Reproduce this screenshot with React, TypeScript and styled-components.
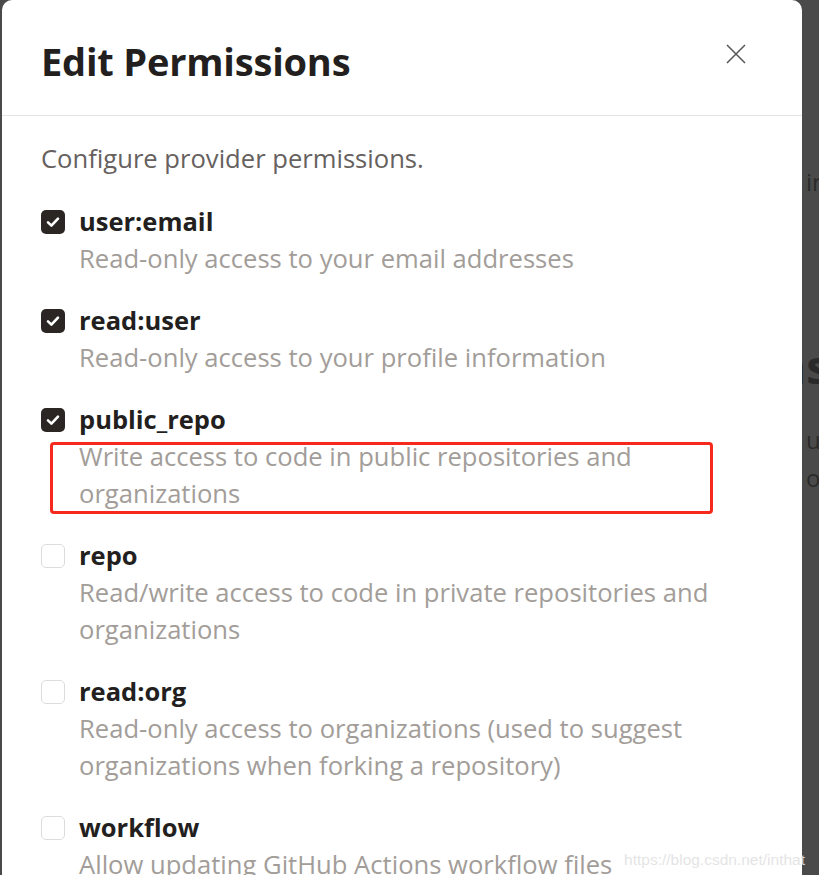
import React from 'react'
import styled, { createGlobalStyle } from 'styled-components'

const permissions = [
    { name: 'user:email', text: 'Read-only access to your email addresses', checked: true },
    { name: 'read:user', text: 'Read-only access to your profile information', checked: true },
    {
        name: 'public_repo',
        text: 'Write access to code in public repositories and organizations',
        checked: true,
        marked: true,
    },
    { name: 'repo', text: 'Read/write access to code in private repositories and organizations', checked: false },
    {
        name: 'read:org',
        text: 'Read-only access to organizations (used to suggest organizations when forking a repository)',
        checked: false,
    },
    { name: 'workflow', text: 'Allow updating GitHub Actions workflow files', checked: false },
]

function App() {
    return (
        <>
            <GlobalStyle />
            <Screen>
                <Modal>
                    <Header>
                        <Title>Edit Permissions</Title>
                        <CloseButton aria-label="Close">
                            <svg width="20" height="20" viewBox="0 0 20 20">
                                <path d="M1 1 L19 19 M19 1 L1 19" stroke="#5a5a5a" strokeWidth="1.6" fill="none" />
                            </svg>
                        </CloseButton>
                    </Header>
                    <Body>
                        <Intro>Configure provider permissions.</Intro>
                        <List>
                            {permissions.map((p) => (
                                <Item key={p.name}>
                                    <Box $checked={p.checked}>
                                        {p.checked && (
                                            <svg width="16" height="16" viewBox="0 0 16 16">
                                                <path
                                                    d="M3 8.4 L6.4 11.6 L13 4.6"
                                                    stroke="#fff"
                                                    strokeWidth="2.6"
                                                    strokeLinecap="round"
                                                    strokeLinejoin="round"
                                                    fill="none"
                                                />
                                            </svg>
                                        )}
                                    </Box>
                                    <Name>{p.name}</Name>
                                    <Description $marked={p.marked}>{p.text}</Description>
                                </Item>
                            ))}
                        </List>
                    </Body>
                </Modal>
                <Behind>
                    <BehindText $top={163}>in</BehindText>
                    <BehindHeading>ns</BehindHeading>
                    <BehindText $top={30}>u</BehindText>
                    <BehindText $top={0}>ov</BehindText>
                </Behind>
                <Watermark>https://blog.csdn.net/inthat</Watermark>
            </Screen>
        </>
    )
}

export default App

const GlobalStyle = createGlobalStyle`
    html, body {
        margin: 0;
        padding: 0;
        background: #4a4a4a;
        overflow: hidden;
    }
    * {
        box-sizing: border-box;
    }
`

const Screen = styled.div`
    position: relative;
    display: flex;
    width: 819px;
    height: 875px;
    overflow: hidden;
    background: #4a4a4a;
    font-family: 'Open Sans', 'Noto Sans', sans-serif;
`

const Modal = styled.div`
    flex: 0 0 800px;
    margin-left: 2px;
    background: #fff;
    border-radius: 10px 10px 0 0;
    height: 900px;
`

const Header = styled.div`
    display: flex;
    align-items: flex-start;
    justify-content: space-between;
    height: 116px;
    padding: 38px 56px 0 39px;
    border-bottom: 1px solid #e4e4e4;
`

const Title = styled.h1`
    margin: 0;
    font-size: 38px;
    line-height: 46px;
    font-weight: 700;
    color: #231f1e;
    letter-spacing: -0.2px;
`

const CloseButton = styled.button`
    display: flex;
    margin-top: 6px;
    padding: 0;
    border: 0;
    background: transparent;
`

const Body = styled.div`
    padding: 24px 40px 0 39px;
`

const Intro = styled.p`
    margin: 0 0 26px;
    font-size: 25.6px;
    line-height: 37px;
    color: #66615e;
`

const List = styled.div`
    display: flex;
    flex-direction: column;
    gap: 25px;
`

const Item = styled.div`
    display: grid;
    grid-template-columns: 24px 1fr;
    column-gap: 14px;
    align-items: center;
`

const Box = styled.span<{ $checked: boolean }>`
    display: flex;
    align-items: center;
    justify-content: center;
    width: 24px;
    height: 24px;
    border-radius: 5px;
    background: ${(p) => (p.$checked ? '#2b2624' : '#fff')};
    border: ${(p) => (p.$checked ? 'none' : '1px solid #dcdcdc')};
`

const Name = styled.span`
    font-size: 25.5px;
    font-weight: 700;
    line-height: 37px;
    color: #231f1e;
`

const Description = styled.div<{ $marked?: boolean }>`
    grid-column: 2;
    position: relative;
    font-size: 25.6px;
    line-height: 37px;
    color: #a29d99;
    padding-right: 30px;

    ${(p) =>
        p.$marked &&
        `
        &::after {
            content: '';
            position: absolute;
            top: 4px;
            left: -29px;
            width: 657px;
            bottom: -2px;
            border: 3px solid #f52a1c;
            border-radius: 4px;
        }
    `}
`

const Behind = styled.div`
    flex: 1;
    overflow: hidden;
    color: #2a2a2a;
    white-space: nowrap;
`

const BehindText = styled.div<{ $top: number }>`
    margin-top: ${(p) => p.$top}px;
    padding-left: 4px;
    font-size: 24px;
    line-height: 38px;
`

const BehindHeading = styled.div`
    margin-top: 140px;
    margin-left: -26px;
    font-size: 46px;
    font-weight: 700;
    line-height: 50px;
`

const Watermark = styled.div`
    position: absolute;
    right: 14px;
    bottom: 6px;
    font-family: 'Liberation Sans', Arial, sans-serif;
    font-size: 15.5px;
    color: rgba(225, 225, 225, 0.9);
`
